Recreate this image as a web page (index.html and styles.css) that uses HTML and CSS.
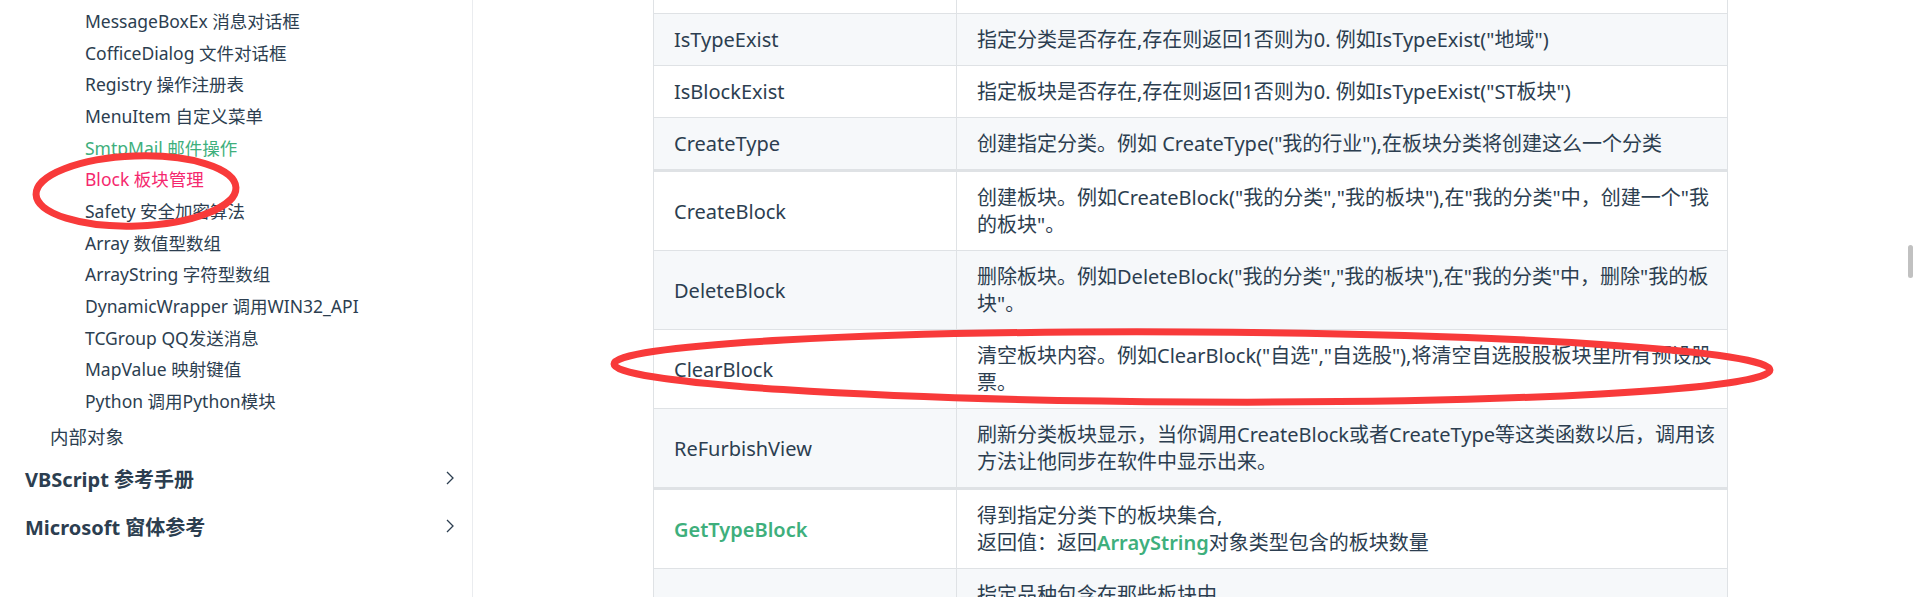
FILE: index.html
```html
<!DOCTYPE html>
<html lang="zh-CN">
<head>
  <meta charset="UTF-8">
  <meta name="viewport" content="width=device-width, initial-scale=1.0">
  <title>Block 板块管理</title>
  <link rel="stylesheet" href="styles.css">
</head>
<body>
<aside class="sidebar">
  <ul class="links">
    <li><a href="#">MessageBoxEx 消息对话框</a></li>
    <li><a href="#">CofficeDialog 文件对话框</a></li>
    <li><a href="#">Registry 操作注册表</a></li>
    <li><a href="#">MenuItem 自定义菜单</a></li>
    <li><a href="#" class="hover">SmtpMail 邮件操作</a></li>
    <li><a href="#" class="active">Block 板块管理</a></li>
    <li><a href="#">Safety 安全加密算法</a></li>
    <li><a href="#">Array 数值型数组</a></li>
    <li><a href="#">ArrayString 字符型数组</a></li>
    <li><a href="#">DynamicWrapper 调用WIN32_API</a></li>
    <li><a href="#">TCGroup QQ发送消息</a></li>
    <li><a href="#">MapValue 映射键值</a></li>
    <li><a href="#">Python 调用Python模块</a></li>
  </ul>
  <div class="sub-heading">内部对象</div>
  <div class="group-heading">
    <span>VBScript 参考手册</span>
    <svg class="arrow" width="10" height="16" viewBox="0 0 10 16"><path d="M2 2l6 6-6 6" fill="none" stroke="#2c3e50" stroke-width="1.3"/></svg>
  </div>
  <div class="group-heading">
    <span>Microsoft 窗体参考</span>
    <svg class="arrow" width="10" height="16" viewBox="0 0 10 16"><path d="M2 2l6 6-6 6" fill="none" stroke="#2c3e50" stroke-width="1.3"/></svg>
  </div>
</aside>

<main class="page">
  <table class="api">
    <tr class="cut"><td>&nbsp;</td><td>&nbsp;</td></tr>
    <tr>
      <td>IsTypeExist</td>
      <td>指定分类是否存在,存在则返回1否则为0. 例如IsTypeExist("地域")</td>
    </tr>
    <tr>
      <td>IsBlockExist</td>
      <td>指定板块是否存在,存在则返回1否则为0. 例如IsTypeExist("ST板块")</td>
    </tr>
    <tr>
      <td>CreateType</td>
      <td>创建指定分类。例如 CreateType("我的行业"),在板块分类将创建这么一个分类</td>
    </tr>
    <tr class="thick">
      <td>CreateBlock</td>
      <td>创建板块。例如CreateBlock("我的分类","我的板块"),在"我的分类"中，创建一个"我的板块"。</td>
    </tr>
    <tr>
      <td>DeleteBlock</td>
      <td>删除板块。例如DeleteBlock("我的分类","我的板块"),在"我的分类"中，删除"我的板块"。</td>
    </tr>
    <tr>
      <td>ClearBlock</td>
      <td>清空板块内容。例如ClearBlock("自选","自选股"),将清空自选股股板块里所有预设股票。</td>
    </tr>
    <tr>
      <td>ReFurbishView</td>
      <td>刷新分类板块显示，当你调用CreateBlock或者CreateType等这类函数以后，调用该方法让他同步在软件中显示出来。</td>
    </tr>
    <tr class="thick">
      <td><strong class="green">GetTypeBlock</strong></td>
      <td>得到指定分类下的板块集合,<br>返回值：返回<strong class="green">ArrayString</strong>对象类型包含的板块数量</td>
    </tr>
    <tr>
      <td></td>
      <td>指定品种包含在那些板块中</td>
    </tr>
  </table>
</main>

<svg class="marks" width="1914" height="597" viewBox="0 0 1914 597">
  <ellipse cx="136" cy="191" rx="100" ry="35" transform="rotate(-2 136 191)"/>
  <ellipse cx="1192" cy="367" rx="578" ry="35" transform="rotate(0.3 1192 367)"/>
</svg>
<div class="thumb"></div>
</body>
</html>
```

FILE: styles.css
```css
html, body {
  margin: 0;
  height: 100%;
  overflow: hidden;
}
body {
  font-family: "Noto Sans", "Noto Sans CJK SC", sans-serif;
  color: #2c3e50;
  background: #fff;
  display: flex;
}
a {
  color: inherit;
  text-decoration: none;
}
.sidebar {
  width: 472px;
  flex: none;
  border-right: 1px solid #eaecef;
  padding-top: 6px;
}
.links {
  list-style: none;
  margin: 0;
  padding: 0;
}
.links a {
  display: block;
  font-size: 17.5px;
  line-height: 23.67px;
  padding: 4px 0 4px 85px;
}
.links a.hover {
  color: #3eaf7c;
}
.links a.active {
  color: #f5286e;
}
.sub-heading {
  font-size: 18.5px;
  line-height: 26px;
  padding: 6px 0 6px 50px;
}
.group-heading {
  display: flex;
  align-items: center;
  justify-content: space-between;
  font-size: 20px;
  font-weight: bold;
  line-height: 24px;
  padding: 12px 17px 12px 25px;
}
.arrow {
  margin-top: -4px;
}
.page {
  flex: 1;
  padding-left: 180px;
}
.api {
  border-collapse: collapse;
  width: 1075px;
  margin-top: -39px;
  font-size: 20px;
  line-height: 27px;
}
.api td {
  border: 1px solid #dfe2e5;
  padding: 12px 20px;
}
.api td:first-child {
  width: 262px;
}
.api td + td {
  padding-right: 6px;
}
.api tr:nth-child(2n) {
  background: #f6f8fa;
}
.api tr.thick td {
  border-top-width: 3px;
}
.green {
  color: #3eaf7c;
  font-weight: 600;
}
.marks {
  position: fixed;
  left: 0;
  top: 0;
  pointer-events: none;
}
.marks ellipse {
  fill: none;
  stroke: #f83a3a;
  stroke-width: 7;
}
.thumb {
  position: fixed;
  right: 1px;
  top: 245px;
  width: 5px;
  height: 33px;
  border-radius: 3px;
  background: #c1c1c1;
}
```
